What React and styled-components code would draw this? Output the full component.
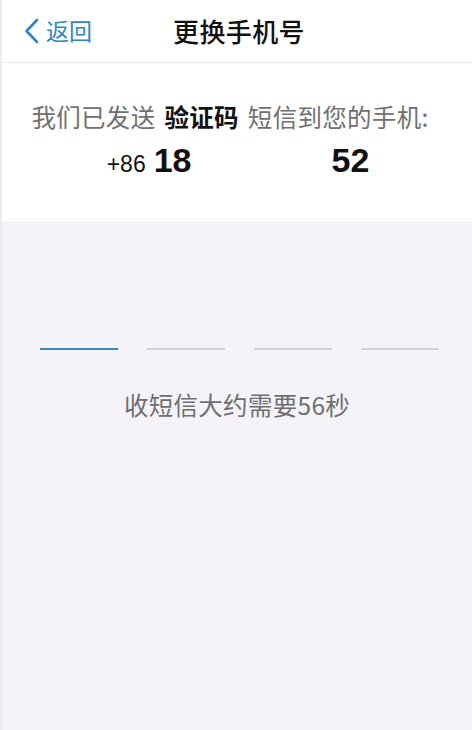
import styled, { createGlobalStyle } from "styled-components"

const Global = createGlobalStyle`
  html, body {
    margin: 0;
    padding: 0;
    background: #f4f4f8;
  }
  body {
    font-family: "Noto Sans CJK SC", "Noto Sans", "Liberation Sans", sans-serif;
  }
`

const Chevron = () => (
  <svg width="15" height="26" viewBox="0 0 15 26" fill="none">
    <path d="M13 2 L2.5 13 L13 24" stroke="#2f86c6" strokeWidth="2.6" strokeLinecap="round" strokeLinejoin="round" />
  </svg>
)

const App = () => {
  const boxes = [true, false, false, false]

  return (
    <Page>
      <Global />
      <Header>
        <Back>
          <Chevron />
          <span>返回</span>
        </Back>
        <Title>更换手机号</Title>
        <div />
      </Header>
      <Info>
        <Sent>
          我们已发送<b>验证码</b>短信到您的手机:
        </Sent>
        <Phone>
          <Code>+86</Code>
          <Digits>18</Digits>
          <Digits>52</Digits>
        </Phone>
      </Info>
      <Body>
        <Inputs>
          {boxes.map((on, i) => (
            <Underline key={i} $active={on} />
          ))}
        </Inputs>
        <Hint>收短信大约需要56秒</Hint>
      </Body>
    </Page>
  )
}

export default App

const Page = styled.div`
  min-height: 730px;
  display: flex;
  flex-direction: column;
  background: #f4f4f8;
  border-left: 2px solid #ececf0;
  box-sizing: border-box;
`

const Header = styled.div`
  height: 62px;
  background: #fff;
  border-bottom: 1px solid #ececee;
  display: grid;
  grid-template-columns: 1fr auto 1fr;
  align-items: center;
  padding: 0 18px 0 22px;
`

const Back = styled.div`
  display: flex;
  align-items: center;
  gap: 7px;
  color: #2f86c6;
  font-size: 23px;
  line-height: 1;
  span {
    margin-top: -1px;
  }
`

const Title = styled.div`
  font-size: 26px;
  font-weight: 500;
  color: #111;
  letter-spacing: 0.4px;
  margin-top: -1px;
`

const Info = styled.div`
  height: 160px;
  background: #fff;
  border-bottom: 1px solid #ececf0;
  box-sizing: border-box;
  display: flex;
  flex-direction: column;
  align-items: center;
  padding-top: 37px;
`

const Sent = styled.div`
  font-size: 24.5px;
  letter-spacing: 0.3px;
  line-height: 34px;
  color: #707070;
  white-space: nowrap;
  margin-left: -14px;
  b {
    color: #111;
    font-weight: 700;
    margin: 0 9px;
  }
`

const Phone = styled.div`
  display: flex;
  align-items: baseline;
  margin-top: 7px;
  margin-left: 2px;
  font-family: "Liberation Sans", Arial, sans-serif;
  color: #111;
`

const Code = styled.span`
  font-size: 23px;
  margin-right: 8px;
`

const Digits = styled.span`
  font-size: 34px;
  font-weight: 700;
  & + & {
    margin-left: 140px;
  }
`

const Body = styled.div`
  flex: 1;
  display: flex;
  flex-direction: column;
  align-items: center;
  padding-top: 125px;
`

const Inputs = styled.div`
  display: flex;
  gap: 29px;
  margin-left: 5px;
`

const Underline = styled.div`
  width: 78px;
  height: 2px;
  background: ${(p) => (p.$active ? "#3d8bb8" : "#c4c4ca")};
  transform: ${(p) => (p.$active ? "none" : "scaleY(0.75)")};
`

const Hint = styled.div`
  margin-top: 38px;
  font-size: 24.5px;
  letter-spacing: 0.3px;
  color: #6e6e72;
  line-height: 34px;
`
